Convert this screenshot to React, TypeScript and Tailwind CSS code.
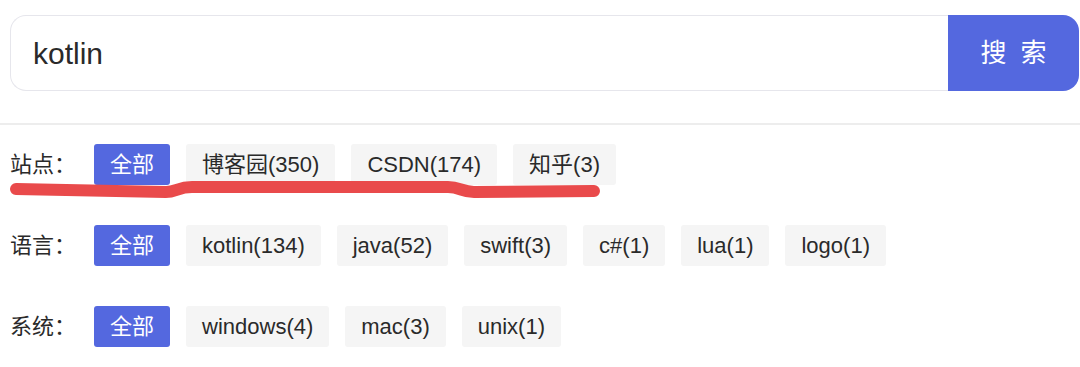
import React from "react";

const rows: { label: string; tags: string[] }[] = [
  { label: "站点：", tags: ["全部", "博客园(350)", "CSDN(174)", "知乎(3)"] },
  { label: "语言：", tags: ["全部", "kotlin(134)", "java(52)", "swift(3)", "c#(1)", "lua(1)", "logo(1)"] },
  { label: "系统：", tags: ["全部", "windows(4)", "mac(3)", "unix(1)"] },
];

export default function App() {
  return (
    <div
      className="relative w-[1080px] h-[367px] bg-white overflow-hidden"
      style={{ fontFamily: '"Liberation Sans", "Noto Sans CJK SC", sans-serif' }}
    >
      <div className="flex pt-[15px] pl-[10px] pr-[1px]">
        <div className="flex-1 h-[76px] border border-r-0 border-[#e6e6ec] rounded-l-[16px] flex items-center pl-[22px] text-[30px] text-[#2a2a2a]">
          kotlin
        </div>
        <div className="w-[131px] h-[76px] bg-[#5468df] rounded-r-[16px] flex items-center justify-center gap-[14px] text-white text-[26px]">
          <span>搜</span>
          <span>索</span>
        </div>
      </div>
      <div className="mt-[32px] h-[2px] bg-[#ededed]" />
      <div className="mt-[19px] pl-[10px] flex flex-col gap-[40px]">
        {rows.map((r) => (
          <div key={r.label} className="flex items-center h-[41px]">
            <div className="w-[84px] text-[22px] text-[#2a2a2a]">{r.label}</div>
            <div className="flex gap-[16px]">
              {r.tags.map((t, i) => (
                <div
                  key={t}
                  className={
                    i === 0
                      ? "h-[41px] px-[16px] flex items-center rounded-[3px] text-[22px] bg-[#5468df] text-white"
                      : "h-[41px] px-[16px] flex items-center rounded-[3px] text-[22px] bg-[#f5f5f5] text-[#2a2a2a]"
                  }
                >
                  {t}
                </div>
              ))}
            </div>
          </div>
        ))}
      </div>
      <svg className="absolute left-0 top-0" width="1080" height="367" viewBox="0 0 1080 367">
        <path
          d="M16 189 L166 192 C176 192 178 187 192 187 L448 187 C460 187 462 192 474 192 L594 191"
          fill="none"
          stroke="#e94a4b"
          strokeWidth="12"
          strokeLinecap="round"
          strokeLinejoin="round"
        />
      </svg>
    </div>
  );
}
